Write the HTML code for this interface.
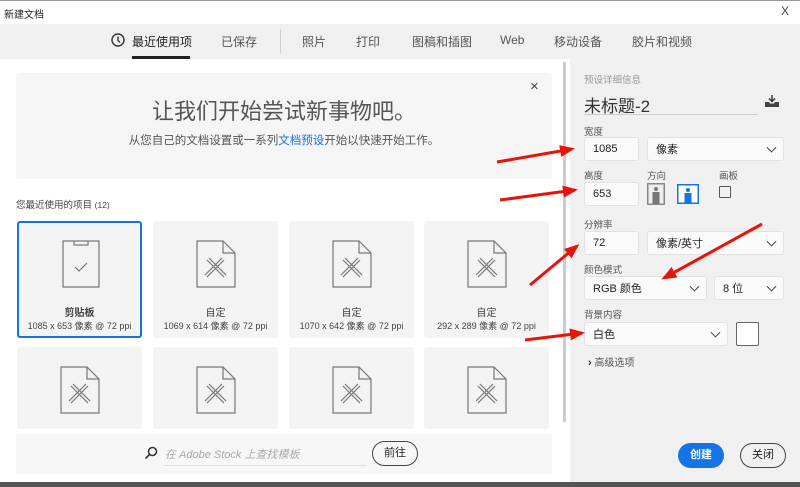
<!DOCTYPE html>
<html><head><meta charset="utf-8"><style>
*{margin:0;padding:0;box-sizing:border-box}
body{width:800px;height:487px;overflow:hidden;position:relative;background:#fff;font-family:"Liberation Sans","Noto Sans CJK SC",sans-serif;color:#333}
.abs{position:absolute}
.tabs span{position:absolute;top:34px;font-size:12px;color:#555}
.card{position:absolute;background:#f3f3f3;border-radius:3px}
.card .t{position:absolute;width:100%;text-align:center;font-size:9px;color:#444}
.lbl{position:absolute;font-size:9.5px;color:#555}
.inp{position:absolute;background:#fafafa;border:1px solid #e2e2e2;border-radius:3px;font-size:11px;color:#222;padding-left:8px;display:flex;align-items:center}
.chev{position:absolute;right:8px;top:50%;width:7px;height:7px;border-right:1.6px solid #444;border-bottom:1.6px solid #444;transform:translateY(-70%) rotate(45deg)}
</style></head><body>
<div class="abs" style="left:0;top:0;width:800px;height:24px;background:#fff"></div>
<div class="abs" style="left:4px;top:6px;font-size:10px;color:#222">新建文档</div>
<div class="abs" style="left:781px;top:4px;font-size:12px;color:#444">X</div>
<div class="abs tabs" style="left:0;top:24px;width:800px;height:35px;background:#f0f0f0">
<svg class="abs" style="left:110px;top:8px" width="16" height="16" viewBox="0 0 16 16"><circle cx="8" cy="8" r="6" fill="none" stroke="#333" stroke-width="1.4"/><path d="M8 4.5V8.5L10 10.5" fill="none" stroke="#333" stroke-width="1.4"/></svg>
<span style="left:132px;top:9px;color:#222">最近使用项</span>
<div class="abs" style="left:132px;top:32px;width:58px;height:3px;background:#222"></div>
<span style="left:221px;top:9px">已保存</span>
<div class="abs" style="left:280px;top:5px;width:1px;height:24px;background:#ccc"></div>
<span style="left:302px;top:9px">照片</span>
<span style="left:356px;top:9px">打印</span>
<span style="left:412px;top:9px">图稿和插图</span>
<span style="left:500px;top:9px">Web</span>
<span style="left:554px;top:9px">移动设备</span>
<span style="left:632px;top:9px">胶片和视频</span>
</div>
<div class="abs" style="left:570px;top:59px;width:230px;height:424px;background:#f0f0f0"></div>
<div class="abs" style="left:563px;top:62px;width:3px;height:360px;background:#ccc"></div>
<!-- hero -->
<div class="abs" style="left:16px;top:73px;width:536px;height:106px;background:#f5f5f5;border-radius:3px"></div>
<div class="abs" style="left:530px;top:78px;font-size:15px;color:#444">×</div>
<div class="abs" style="left:16px;top:94px;width:536px;text-align:center;font-size:22px;color:#555">让我们开始尝试新事物吧。</div>
<div class="abs" style="left:16px;top:132px;width:536px;text-align:center;font-size:11.5px;color:#555">从您自己的文档设置或一系列<span style="color:#1473e6">文档预设</span>开始以快速开始工作。</div>
<div class="abs" style="left:16px;top:197px;font-size:9.5px;color:#444">您最近使用的项目 <span style="font-size:8.5px">(12)</span></div>
<!-- cards row1 -->
<div class="card" style="left:17px;top:221px;width:125px;height:117px;border:2px solid #1473e6;background:#f3f3f3">
<svg class="abs" style="left:43px;top:17px" width="38" height="48" viewBox="0 0 38 48"><path d="M1 1H37V47H1Z" fill="none" stroke="#777" stroke-width="1.2"/><path d="M12 1V5H26V1" fill="none" stroke="#777" stroke-width="1.2"/><path d="M13 27L17 31L25 23" fill="none" stroke="#777" stroke-width="1.2"/></svg>
<div class="t" style="top:81px;font-weight:bold;font-size:10px">剪贴板</div><div class="t" style="top:96px">1085 x 653 像素 @ 72 ppi</div></div>
<div class="card" style="left:153px;top:221px;width:125px;height:117px">
<svg class="abs" style="left:43px;top:19px" width="40" height="48" viewBox="0 0 40 48"><path d="M1 1H27L39 13V47H1Z M27 1V13H39" fill="none" stroke="#777" stroke-width="1.2"/><path d="M11 20L28 37M28 20L11 37M13 18L30 35M26 18L9 35" fill="none" stroke="#777" stroke-width="1.2"/></svg>
<div class="t" style="top:83px;font-size:10px">自定</div><div class="t" style="top:98px">1069 x 614 像素 @ 72 ppi</div></div>
<div class="card" style="left:289px;top:221px;width:125px;height:117px">
<svg class="abs" style="left:43px;top:19px" width="40" height="48" viewBox="0 0 40 48"><path d="M1 1H27L39 13V47H1Z M27 1V13H39" fill="none" stroke="#777" stroke-width="1.2"/><path d="M11 20L28 37M28 20L11 37M13 18L30 35M26 18L9 35" fill="none" stroke="#777" stroke-width="1.2"/></svg>
<div class="t" style="top:83px;font-size:10px">自定</div><div class="t" style="top:98px">1070 x 642 像素 @ 72 ppi</div></div>
<div class="card" style="left:424px;top:221px;width:125px;height:117px">
<svg class="abs" style="left:43px;top:19px" width="40" height="48" viewBox="0 0 40 48"><path d="M1 1H27L39 13V47H1Z M27 1V13H39" fill="none" stroke="#777" stroke-width="1.2"/><path d="M11 20L28 37M28 20L11 37M13 18L30 35M26 18L9 35" fill="none" stroke="#777" stroke-width="1.2"/></svg>
<div class="t" style="top:83px;font-size:10px">自定</div><div class="t" style="top:98px">292 x 289 像素 @ 72 ppi</div></div>
<!-- row2 -->
<div class="card" style="left:17px;top:347px;width:125px;height:82px"><svg class="abs" style="left:43px;top:19px" width="40" height="48" viewBox="0 0 40 48"><path d="M1 1H27L39 13V47H1Z M27 1V13H39" fill="none" stroke="#777" stroke-width="1.2"/><path d="M11 20L28 37M28 20L11 37M13 18L30 35M26 18L9 35" fill="none" stroke="#777" stroke-width="1.2"/></svg></div>
<div class="card" style="left:153px;top:347px;width:125px;height:82px"><svg class="abs" style="left:43px;top:19px" width="40" height="48" viewBox="0 0 40 48"><path d="M1 1H27L39 13V47H1Z M27 1V13H39" fill="none" stroke="#777" stroke-width="1.2"/><path d="M11 20L28 37M28 20L11 37M13 18L30 35M26 18L9 35" fill="none" stroke="#777" stroke-width="1.2"/></svg></div>
<div class="card" style="left:289px;top:347px;width:125px;height:82px"><svg class="abs" style="left:43px;top:19px" width="40" height="48" viewBox="0 0 40 48"><path d="M1 1H27L39 13V47H1Z M27 1V13H39" fill="none" stroke="#777" stroke-width="1.2"/><path d="M11 20L28 37M28 20L11 37M13 18L30 35M26 18L9 35" fill="none" stroke="#777" stroke-width="1.2"/></svg></div>
<div class="card" style="left:424px;top:347px;width:125px;height:82px"><svg class="abs" style="left:43px;top:19px" width="40" height="48" viewBox="0 0 40 48"><path d="M1 1H27L39 13V47H1Z M27 1V13H39" fill="none" stroke="#777" stroke-width="1.2"/><path d="M11 20L28 37M28 20L11 37M13 18L30 35M26 18L9 35" fill="none" stroke="#777" stroke-width="1.2"/></svg></div>
<!-- search -->
<div class="abs" style="left:16px;top:434px;width:536px;height:40px;background:#f7f7f7;border-radius:3px"></div>
<svg class="abs" style="left:144px;top:446px" width="14" height="14" viewBox="0 0 14 14"><circle cx="8.5" cy="5.5" r="4" fill="none" stroke="#333" stroke-width="1.5"/><path d="M5.5 8.5L1.5 12.5" stroke="#333" stroke-width="1.7"/></svg>
<div class="abs" style="left:165px;top:446px;font-size:11px;color:#aaa;font-style:italic">在 Adobe Stock 上查找模板</div>
<div class="abs" style="left:164px;top:465px;width:203px;height:1px;background:#ddd"></div>
<div class="abs" style="left:372px;top:441px;width:46px;height:25px;border:1.5px solid #444;border-radius:13px;font-size:11px;text-align:center;line-height:22px;color:#222">前往</div>
<!-- right panel -->
<div class="lbl" style="left:584px;top:72px;color:#999">预设详细信息</div>
<div class="abs" style="left:584px;top:92px;font-size:17px;color:#333">未标题-2</div>
<div class="abs" style="left:584px;top:114px;width:173px;height:1px;background:#ccc"></div>
<svg class="abs" style="left:764px;top:94px" width="16" height="14" viewBox="0 0 16 14"><path d="M8 1V7M5 4.5L8 7.5L11 4.5" fill="none" stroke="#444" stroke-width="1.6"/><path d="M1 8H5L6 9.5H10L11 8H15V13H1Z" fill="#444"/></svg>
<div class="lbl" style="left:584px;top:124px">宽度</div>
<div class="inp" style="left:584px;top:137px;width:55px;height:24px">1085</div>
<div class="inp" style="left:647px;top:137px;width:137px;height:24px">像素<span class="chev"></span></div>
<div class="lbl" style="left:584px;top:168px">高度</div>
<div class="lbl" style="left:647px;top:168px">方向</div>
<div class="lbl" style="left:719px;top:168px">画板</div>
<div class="inp" style="left:584px;top:182px;width:55px;height:24px">653</div>
<svg class="abs" style="left:647px;top:183px" width="18" height="22" viewBox="0 0 18 22"><rect x="0.75" y="0.75" width="16.5" height="20.5" fill="#eee" stroke="#888" stroke-width="1.5"/><circle cx="9" cy="6" r="2" fill="#777"/><rect x="5.5" y="9" width="7" height="12" fill="#777"/></svg>
<svg class="abs" style="left:677px;top:184px" width="22" height="20" viewBox="0 0 22 20"><rect x="0.75" y="0.75" width="20.5" height="18.5" fill="#fff" stroke="#1473e6" stroke-width="1.5"/><circle cx="11" cy="6" r="2" fill="#1473e6"/><rect x="7.5" y="9" width="7" height="10" fill="#1473e6"/></svg>
<div class="abs" style="left:719px;top:186px;width:12px;height:12px;border:1.3px solid #555;border-radius:1px"></div>
<div class="lbl" style="left:584px;top:217px">分辨率</div>
<div class="inp" style="left:584px;top:231px;width:55px;height:24px">72</div>
<div class="inp" style="left:647px;top:231px;width:137px;height:24px">像素/英寸<span class="chev"></span></div>
<div class="lbl" style="left:584px;top:262px">颜色模式</div>
<div class="inp" style="left:584px;top:276px;width:123px;height:24px">RGB 颜色<span class="chev"></span></div>
<div class="inp" style="left:714px;top:276px;width:70px;height:24px">8 位<span class="chev"></span></div>
<div class="lbl" style="left:584px;top:307px">背景内容</div>
<div class="inp" style="left:584px;top:322px;width:144px;height:24px">白色<span class="chev"></span></div>
<div class="abs" style="left:736px;top:322px;width:23px;height:24px;background:#fff;border:1.3px solid #666;border-radius:2px"></div>
<div class="abs" style="left:588px;top:354px;font-size:10px;color:#555"><b style="font-size:11px;color:#333">›</b> 高级选项</div>
<div class="abs" style="left:678px;top:443px;width:46px;height:25px;background:#1473e6;border-radius:13px;color:#fff;font-size:11px;font-weight:bold;text-align:center;line-height:25px">创建</div>
<div class="abs" style="left:740px;top:443px;width:46px;height:25px;border:1.5px solid #444;border-radius:13px;font-size:11px;text-align:center;line-height:22px;color:#222">关闭</div>
<!-- bottom bar -->
<div class="abs" style="left:0;top:482px;width:800px;height:5px;background:#555"></div>
<div class="abs" style="left:0;top:0;width:800px;height:1px;background:#999"></div>
<!-- arrows -->
<svg class="abs" style="left:0;top:0" width="800" height="487" viewBox="0 0 800 487">
<defs><marker id="a" markerWidth="5" markerHeight="4" refX="4" refY="2" orient="auto"><path d="M0 0L5 2L0 4Z" fill="#e8140c"/></marker></defs>
<g stroke="#e8140c" stroke-width="3" marker-end="url(#a)" fill="none">
<line x1="497" y1="162" x2="572" y2="149"/>
<line x1="500" y1="200" x2="575" y2="190"/>
<line x1="530" y1="285" x2="577" y2="246"/>
<line x1="762" y1="224" x2="664" y2="278"/>
<line x1="525" y1="340" x2="582" y2="333"/>
</g></svg>
</body></html>
